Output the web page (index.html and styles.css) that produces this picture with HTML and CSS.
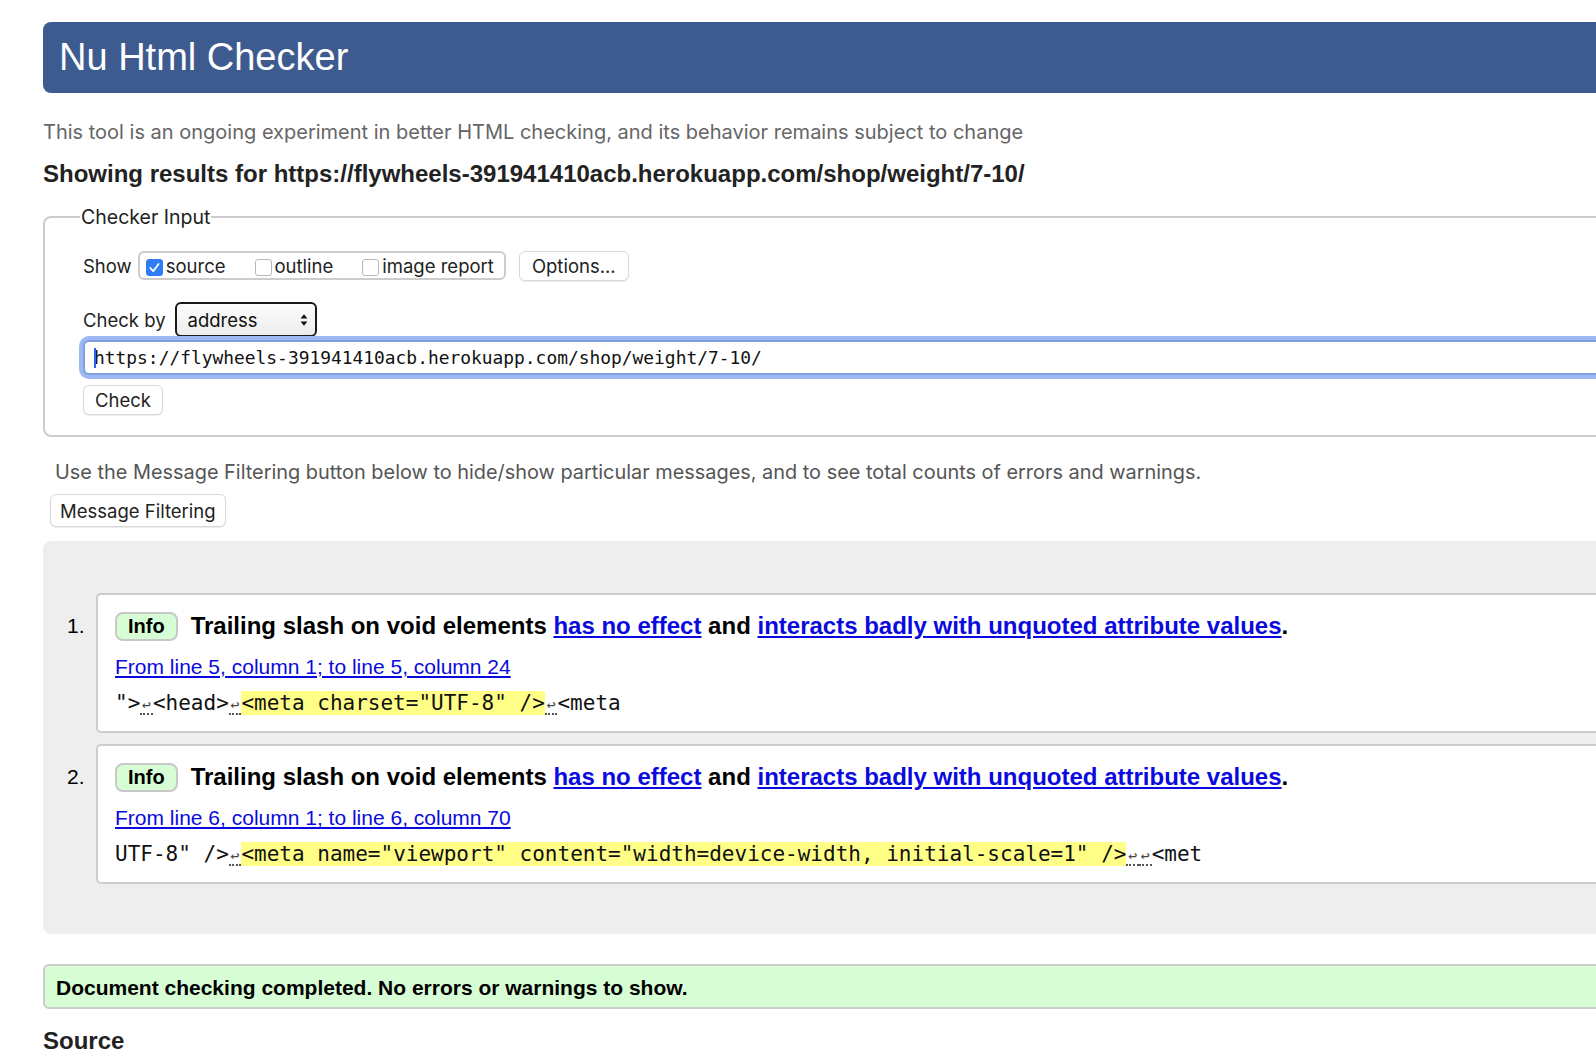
FILE: index.html
```html
<!DOCTYPE html>
<html lang="en">
<head>
<meta charset="utf-8">
<title>Nu Html Checker</title>
<link rel="stylesheet" href="styles.css">
</head>
<body>
<div class="page">
  <header class="banner"><h1>Nu Html Checker</h1></header>
  <p class="intro">This tool is an ongoing experiment in better HTML checking, and its behavior remains subject to change</p>
  <h2 class="results-for">Showing results for https://flywheels-391941410acb.herokuapp.com/shop/weight/7-10/</h2>

  <fieldset class="checker">
    <legend>Checker Input</legend>
    <div class="row show-row">
      <span class="lbl">Show</span>
      <div class="show-group">
        <label class="opt"><span class="cb on"><svg viewBox="0 0 17 17" width="17" height="17"><path d="M4.3 9l2.9 3.2L12.6 5" stroke="#fff" stroke-width="1.8" fill="none" stroke-linecap="round" stroke-linejoin="round"/></svg></span>source</label>
        <label class="opt"><span class="cb"></span>outline</label>
        <label class="opt last"><span class="cb"></span>image report</label>
      </div>
      <button class="btn opt-btn">Options...</button>
    </div>
    <div class="row by-row">
      <span class="lbl by-lbl">Check by</span>
      <div class="select"><span>address</span><svg width="8" height="14" viewBox="0 0 8 14"><path d="M4 1.2L7.4 5.6H0.6Z M4 12.8L0.6 8.4H7.4Z" fill="#111"/></svg></div>
    </div>
    <div class="url"><span class="caret"></span>https://flywheels-391941410acb.herokuapp.com/shop/weight/7-10/</div>
    <button class="btn check-btn">Check</button>
  </fieldset>

  <p class="filter-note">Use the Message Filtering button below to hide/show particular messages, and to see total counts of errors and warnings.</p>
  <button class="btn filter-btn">Message Filtering</button>

  <section class="results">
    <ol class="messages">
      <li class="msg">
        <span class="num">1.</span>
        <div class="card">
          <p class="msg-title"><span class="badge">Info</span>Trailing slash on void elements <a href="#">has no effect</a> and <a href="#">interacts badly with unquoted attribute values</a>.</p>
          <p class="loc"><a href="#">From line 5, column 1; to line 5, column 24</a></p>
          <p class="extract">"&gt;<span class="lf">↩</span>&lt;head&gt;<span class="lf">↩</span><mark class="hl">&lt;meta charset="UTF-8" /&gt;</mark><span class="lf">↩</span>&lt;meta</p>
        </div>
      </li>
      <li class="msg">
        <span class="num">2.</span>
        <div class="card">
          <p class="msg-title"><span class="badge">Info</span>Trailing slash on void elements <a href="#">has no effect</a> and <a href="#">interacts badly with unquoted attribute values</a>.</p>
          <p class="loc"><a href="#">From line 6, column 1; to line 6, column 70</a></p>
          <p class="extract">UTF-8" /&gt;<span class="lf">↩</span><mark class="hl">&lt;meta name="viewport" content="width=device-width, initial-scale=1" /&gt;</mark><span class="lf">↩</span><span class="lf">↩</span>&lt;met</p>
        </div>
      </li>
    </ol>
  </section>

  <p class="done">Document checking completed. No errors or warnings to show.</p>
  <h2 class="source">Source</h2>
</div>
</body>
</html>
```

FILE: styles.css
```css
html, body {
  overflow: hidden;
}

body {
  margin: 0;
  background: #fff;
  color: #222;
  font-family: Inter, "Liberation Sans", sans-serif;
}

.page {
  width: 1800px;
  padding: 22px 0 0 43px;
}

.banner {
  background: #3d5b8e;
  height: 71px;
  border-radius: 8px;
  padding-left: 16px;
}

.banner h1 {
  margin: 0;
  font: 400 38px/71px "Liberation Sans", Arial, sans-serif;
  color: #fff;
}

.intro {
  margin: 25px 0 0;
  font: 400 20px/28px Inter, sans-serif;
  color: #666;
}

.results-for {
  margin: 14px 0 0;
  font: 700 24px/28px "Liberation Sans", Arial, sans-serif;
  color: #222;
}

.checker {
  margin: 17px 0 0;
  border: 2px solid #ccc;
  border-radius: 8px;
  padding: 21px 0 20px 38px;
  min-width: 0;
}

.checker legend {
  padding: 0 1px;
  margin-left: -3px;
  font: 400 19.5px/24px Inter, sans-serif;
  color: #222;
}

.row {
  display: flex;
  align-items: center;
}

.show-row {
  height: 31px;
}

.lbl {
  font: 400 18.5px/24px Inter, sans-serif;
  color: #222;
  margin-right: 6px;
}

.by-lbl {
  margin-right: 9px;
}

.show-group {
  display: flex;
  align-items: center;
  height: 29px;
  box-sizing: border-box;
  border: 2px solid #ccc;
  border-radius: 6px;
  padding: 0 10px 0 6px;
}

.opt {
  display: flex;
  align-items: center;
  gap: 3px;
  margin-right: 29px;
  font: 400 18.5px/24px Inter, sans-serif;
  color: #222;
}

.opt.last {
  margin-right: 0;
}

.cb {
  width: 17px;
  height: 17px;
  box-sizing: border-box;
  border: 1px solid #b8b8b8;
  border-radius: 3px;
  background: #fff;
  margin-top: 3px;
  display: flex;
}

.cb.on {
  background: #2f7cf6;
  border-color: #2f7cf6;
}

.cb svg {
  margin: -1px;
}

.btn {
  display: block;
  font: 400 18.5px/24px Inter, sans-serif;
  color: #222;
  background: #fff;
  border: 1px solid #d8d8d8;
  border-radius: 6px;
  height: 30px;
  padding: 0 11px;
  box-shadow: 0 1px 1px rgba(0, 0, 0, 0.08);
}

.opt-btn {
  margin-left: 13px;
  padding: 0 12px;
}

.by-row {
  margin-top: 21px;
  height: 35px;
}

.select {
  width: 142px;
  height: 35px;
  box-sizing: border-box;
  border: 2px solid #1a1a1a;
  border-radius: 6px;
  background: linear-gradient(#fdfdfd, #ececec);
  display: flex;
  align-items: center;
  justify-content: space-between;
  padding: 0 7px 0 11px;
  font: 400 18.5px/24px Inter, sans-serif;
  color: #111;
}

.url {
  position: relative;
  margin-top: 3px;
  height: 35px;
  box-sizing: border-box;
  border: 2px solid #7f9fe2;
  box-shadow: 0 0 0 4px #9db8f2;
  border-radius: 6px;
  padding-left: 9px;
  display: flex;
  align-items: center;
  font: 400 17.9px/24px "DejaVu Sans Mono", monospace;
  color: #111;
  background: #fff;
}

.caret {
  position: absolute;
  left: 9px;
  top: 6px;
  width: 2px;
  height: 20px;
  background: #2a62e8;
}

.check-btn {
  margin-top: 10px;
}

.filter-note {
  margin: 23px 0 0 12px;
  font: 400 19.9px/24px Inter, sans-serif;
  color: #555;
}

.filter-btn {
  margin: 10px 0 0 7px;
  height: 33px;
  padding: 0 9px;
}

.results {
  margin-top: 14px;
  background: #eee;
  border-radius: 8px;
  padding: 52px 0 50px;
}

.messages {
  list-style: none;
  margin: 0;
  padding: 0;
  display: flex;
  flex-direction: column;
  gap: 11px;
}

.msg {
  display: flex;
}

.num {
  width: 53px;
  box-sizing: border-box;
  padding: 18px 0 0 24px;
  font: 400 21px/30px "Liberation Sans", Arial, sans-serif;
  color: #000;
}

.card {
  flex: 1;
  background: #fff;
  border: 2px solid #ccc;
  border-radius: 5px;
  padding: 16px 20px 15px 17px;
  font-family: "Liberation Sans", Arial, sans-serif;
  color: #000;
}

.card p {
  margin: 0;
}

.card a {
  color: #0a0ade;
  text-decoration: underline;
}

.msg-title {
  font: 700 24px/30px "Liberation Sans", Arial, sans-serif;
}

.badge {
  display: inline-block;
  vertical-align: middle;
  height: 29px;
  box-sizing: border-box;
  border: 2px solid #c8c8c8;
  border-radius: 8px;
  background: #d7fdd4;
  padding: 0 11px;
  margin-right: 13px;
  font: 700 20px/25px "Liberation Sans", Arial, sans-serif;
  position: relative;
  top: -1px;
}

.card .loc {
  margin-top: 12px;
  font: 400 21px/26px "Liberation Sans", Arial, sans-serif;
}

.card .extract {
  margin-top: 10px;
  font: 400 21px/26px "DejaVu Sans Mono", monospace;
  white-space: pre;
  color: #111;
}

.hl {
  background: #ffff88;
  color: #111;
}

.lf {
  display: inline-block;
  width: 12.64px;
  font-size: 15px;
  line-height: 16px;
  letter-spacing: 0;
  text-align: center;
  color: #444;
  border-bottom: 2px dotted #555;
  box-sizing: border-box;
  padding: 0;
}

.done {
  margin: 30px 0 0;
  border: 2px solid #ccc;
  border-radius: 6px;
  background: #d7fdd4;
  padding: 9px 11px 6px;
  font: 700 21px/26px "Liberation Sans", Arial, sans-serif;
  color: #000;
}

.source {
  margin: 18px 0 0;
  font: 700 24px/28px "Liberation Sans", Arial, sans-serif;
  color: #222;
}
```
